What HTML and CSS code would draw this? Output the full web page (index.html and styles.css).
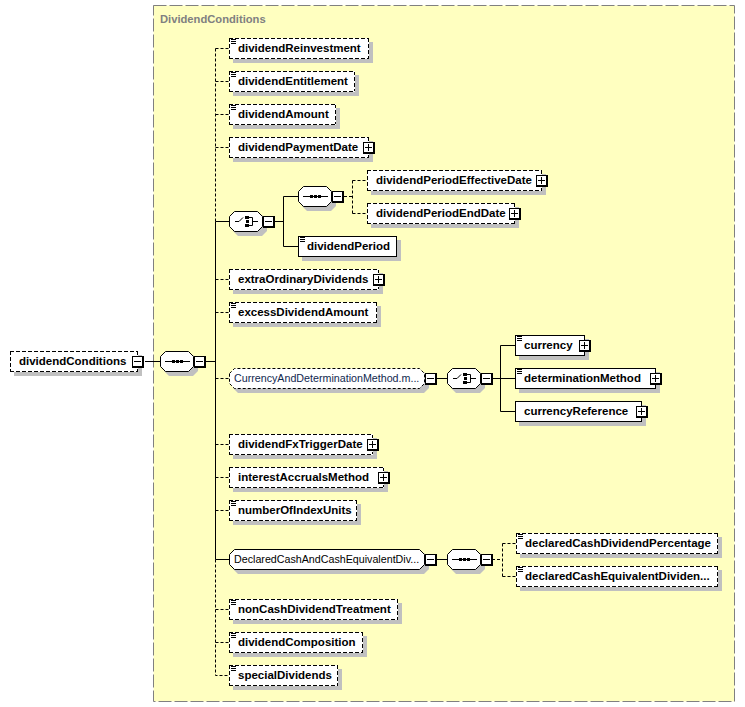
FILE: index.html
```html
<!DOCTYPE html>
<html lang="en">
<head>
<meta charset="utf-8">
<title>dividendConditions</title>
<link rel="stylesheet" href="styles.css">
</head>
<body>
<main class="canvas">
  <svg class="wires" width="745" height="707" viewBox="0 0 745 707" xmlns="http://www.w3.org/2000/svg">
    <defs>
      <g id="seq"><path class="ic" d="M5 10.5H30"/><path class="dots" d="M12 9h3v3h-3zM16 9h3v3h-3zM20 9h3v3h-3z"/></g>
      <g id="cho"><path class="ic" d="M6 10.500H10L14 6.500M20 6.500H23.500V14.500H20M23.500 10.500H29"/><path class="dots" d="M16 5h4v3h-4zM17 9h3v3h-3zM16 13h4v3h-4z"/></g>
    </defs>
    <rect class="group" x="153.5" y="5.5" width="581" height="696"/>
    <g class="dash">
      <path d="M215.5 48.5V221.5M215.5 48.5H229M215.5 81.5H229M215.5 114.5H229M215.5 147.5H229"/>
      <path d="M215.5 279.5H229M215.5 312.5H229M215.5 378.5H229M215.5 444.5H229M215.5 477.5H229M215.5 510.5H229"/>
      <path d="M215.5 559.5V675.5H229M215.5 609.5H229M215.5 642.5H229"/>
      <path d="M344 196.5H352.5M352.5 180.5V213.5M352.5 180.5H367M352.5 213.5H367"/>
      <path d="M492 559.5H502.5M502.5 543.5V576.5M502.5 543.5H516M502.5 576.5H516"/>
    </g>
    <g class="solid">
      <path d="M145 361.5H160M206 361.5H215.5M215.5 221.5V559.5M215.5 221.5H229M215.5 559.5H229"/>
      <path d="M275 221.5H283.5M283.5 196.5V246.5M283.5 196.5H298M283.5 246.5H298"/>
      <path d="M436 378.5H447M492 378.5H500.5M500.5 345.5V411.5M500.5 345.5H515M500.5 378.5H515M500.5 411.5H515"/>
      <path d="M436 559.5H447"/>
    </g>
    <g class="shadow">
      <path d="M164 360l5-5h24l5 5v11l-5 5h-24l-5-5z"/>
      <path d="M233 220l5-5h24l5 5v11l-5 5h-24l-5-5z"/>
      <path d="M302 195l5-5h24l5 5v11l-5 5h-24l-5-5z"/>
      <path d="M233 377l5-5h186l5 5v11l-5 5h-186l-5-5z"/>
      <path d="M451 377l5-5h24l5 5v11l-5 5h-24l-5-5z"/>
      <path d="M233 558l5-5h186l5 5v11l-5 5h-186l-5-5z"/>
      <path d="M451 558l5-5h24l5 5v11l-5 5h-24l-5-5z"/>
    </g>
    <g class="oct">
      <path d="M160.5 356.500l5-5h23l5 5v10l-5 5h-23l-5-5z"/>
      <path d="M229.500 216.500l5-5h23l5 5v10l-5 5h-23l-5-5z"/>
      <path d="M298.500 191.500l5-5h23l5 5v10l-5 5h-23l-5-5z"/>
      <path class="dashed" d="M229.500 373.500l5-5h185l5 5v10l-5 5h-185l-5-5z"/>
      <path d="M447.500 373.500l5-5h23l5 5v10l-5 5h-23l-5-5z"/>
      <path d="M229.500 554.500l5-5h185l5 5v10l-5 5h-185l-5-5z"/>
      <path d="M447.500 554.500l5-5h23l5 5v10l-5 5h-23l-5-5z"/>
    </g>
    <use href="#seq" x="160" y="351"/>
    <use href="#cho" x="229" y="211"/>
    <use href="#seq" x="298" y="186"/>
    <use href="#cho" x="447" y="368"/>
    <use href="#seq" x="447" y="549"/>
  </svg>

  <h1 class="group-title">DividendConditions</h1>

  <div class="node opt root">dividendConditions<span class="tog"></span></div>

  <div class="node opt doc r1">dividendReinvestment</div>
  <div class="node opt doc r2">dividendEntitlement</div>
  <div class="node opt doc r3">dividendAmount</div>
  <div class="node opt r4">dividendPaymentDate<span class="tog plus"></span></div>
  <div class="node opt r5">dividendPeriodEffectiveDate<span class="tog plus"></span></div>
  <div class="node opt r6">dividendPeriodEndDate<span class="tog plus"></span></div>
  <div class="node doc r7">dividendPeriod</div>
  <div class="node opt r8">extraOrdinaryDividends<span class="tog plus"></span></div>
  <div class="node opt doc r9">excessDividendAmount</div>
  <div class="node doc r10">currency<span class="tog plus"></span></div>
  <div class="node doc r11">determinationMethod<span class="tog plus"></span></div>
  <div class="node r12">currencyReference<span class="tog plus"></span></div>
  <div class="node opt r13">dividendFxTriggerDate<span class="tog plus"></span></div>
  <div class="node opt r14">interestAccrualsMethod<span class="tog plus"></span></div>
  <div class="node opt doc r15">numberOfIndexUnits</div>
  <div class="node opt doc r16">declaredCashDividendPercentage</div>
  <div class="node opt doc r17">declaredCashEquivalentDividen...</div>
  <div class="node opt doc r18">nonCashDividendTreatment</div>
  <div class="node opt doc r19">dividendComposition</div>
  <div class="node opt doc r20">specialDividends</div>

  <div class="grp g1">CurrencyAndDeterminationMethod.m...</div>
  <div class="grp g2">DeclaredCashAndCashEquivalentDiv...</div>

  <span class="tog at-root"></span>
  <span class="tog at-cho1"></span>
  <span class="tog at-seq1"></span>
  <span class="tog at-g1"></span>
  <span class="tog at-cho2"></span>
  <span class="tog at-g2"></span>
  <span class="tog at-seq2"></span>
</main>
</body>
</html>
```

FILE: styles.css
```css
html, body { margin: 0; padding: 0; background: #fff; }
.canvas {
  position: relative;
  width: 745px;
  height: 707px;
  overflow: hidden;
  font-family: "Liberation Sans", Arial, sans-serif;
  font-size: 11.5px;
  color: #000;
}
.wires { position: absolute; left: 0; top: 0; }
.group { fill: #ffffc0; stroke: #808080; stroke-width: 1; stroke-dasharray: 13 3; }
.dash path { fill: none; stroke: #000; stroke-width: 1; stroke-dasharray: 3 2; }
.solid path { fill: none; stroke: #000; stroke-width: 1; }
.shadow path { fill: #c0c0c0; }
.oct path { fill: #fff; stroke: #000; stroke-width: 1; }
.oct path.dashed { stroke-dasharray: 3 2; }
.ic { fill: none; stroke: #000; stroke-width: 1; }
.dots { fill: #000; }

.group-title {
  position: absolute;
  left: 160px;
  top: 12px;
  margin: 0;
  font-size: 11.2px;
  line-height: 14px;
  font-weight: 700;
  color: #808080;
}

.node {
  position: absolute;
  box-sizing: border-box;
  height: 21px;
  padding-left: 9px;
  background-color: #fff;
  box-shadow: 4px 4px 0 #c0c0c0;
  font-weight: 700;
  line-height: 20px;
  white-space: nowrap;
  background-image:
    linear-gradient(#000, #000), linear-gradient(#000, #000),
    linear-gradient(#000, #000), linear-gradient(#000, #000);
  background-size: 100% 1px, 100% 1px, 1px 100%, 1px 100%;
  background-position: 0 0, 0 100%, 0 0, 100% 0;
  background-repeat: no-repeat;
}
.node.opt {
  background-image:
    repeating-linear-gradient(90deg, #000 0 4px, #fff 4px 6px),
    repeating-linear-gradient(90deg, #000 0 4px, #fff 4px 6px),
    repeating-linear-gradient(180deg, #000 0 4px, #fff 4px 6px),
    repeating-linear-gradient(180deg, #000 0 4px, #fff 4px 6px);
}
.node.doc::before {
  content: "";
  position: absolute;
  left: 2px;
  top: 1px;
  width: 5px;
  height: 5px;
  background: repeating-linear-gradient(to bottom, #000 0 1px, #fff 1px 2px);
}

.grp {
  position: absolute;
  left: 234px;
  height: 21px;
  font-size: 10.7px;
  line-height: 21px;
  white-space: nowrap;
}
.g1 { top: 368px; color: #10284f; }
.g2 { top: 549px; color: #000; }

.tog {
  position: absolute;
  box-sizing: border-box;
  width: 12px;
  height: 12px;
  background: #fff;
  border: 1px solid #000;
  border-right-width: 2px;
  border-bottom-width: 2px;
}
.tog::before {
  content: "";
  position: absolute;
  left: 1px;
  top: 4px;
  width: 7px;
  height: 1px;
  background: #000;
}
.tog.plus::after {
  content: "";
  position: absolute;
  left: 4px;
  top: 1px;
  width: 1px;
  height: 7px;
  background: #000;
}
.node > .tog { top: 5px; right: -6px; }

.root { left: 10px; top: 351px; width: 128px; }
.r1 { left: 229px; top: 38px; width: 140px; }
.r2 { left: 229px; top: 71px; width: 126px; }
.r3 { left: 229px; top: 104px; width: 107px; }
.r4 { left: 229px; top: 137px; width: 140px; }
.r5 { left: 367px; top: 170px; width: 175px; }
.r6 { left: 367px; top: 203px; width: 148px; }
.r7 { left: 298px; top: 236px; width: 99px; }
.r8 { left: 229px; top: 269px; width: 150px; }
.r9 { left: 229px; top: 302px; width: 148px; }
.r10 { left: 515px; top: 335px; width: 70px; }
.r11 { left: 515px; top: 368px; width: 141px; }
.r12 { left: 515px; top: 401px; width: 127px; }
.r13 { left: 229px; top: 434px; width: 144px; }
.r14 { left: 229px; top: 467px; width: 155px; }
.r15 { left: 229px; top: 500px; width: 128px; }
.r16 { left: 516px; top: 533px; width: 202px; }
.r17 { left: 516px; top: 566px; width: 202px; }
.r18 { left: 229px; top: 599px; width: 169px; }
.r19 { left: 229px; top: 632px; width: 134px; }
.r20 { left: 229px; top: 665px; width: 109px; }

.at-root { left: 194px; top: 356px; }
.at-cho1 { left: 263px; top: 216px; }
.at-seq1 { left: 332px; top: 191px; }
.at-g1 { left: 425px; top: 373px; }
.at-cho2 { left: 481px; top: 373px; }
.at-g2 { left: 425px; top: 554px; }
.at-seq2 { left: 481px; top: 554px; }
```
